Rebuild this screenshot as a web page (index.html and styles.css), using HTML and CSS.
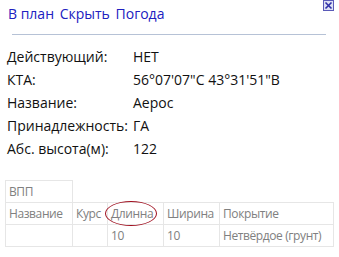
FILE: index.html
```html
<!DOCTYPE html>
<html lang="ru">

<head>
    <meta charset="UTF-8">
    <title>Аэродром</title>
    <link rel="stylesheet" href="styles.css">
</head>

<body>
    <div class="popup">
        <div class="top-bar">
            <div class="links">
                <a href="#">В план</a>
                <a href="#">Скрыть</a>
                <a href="#">Погода</a>
            </div>
            <a href="#" class="close">
                <svg width="11" height="11" viewBox="0 0 11 11">
                    <rect x="0.5" y="0.5" width="10" height="10" fill="#dde0f4" stroke="#5a5ab8"></rect>
                    <path d="M2.5 2.5 L8.5 8.5 M8.5 2.5 L2.5 8.5" stroke="#3030a8" stroke-width="1.6"></path>
                </svg>
            </a>
        </div>
        <div class="divider"></div>

        <!-- Сведения об аэродроме -->
        <div class="info">
            <span>Действующий:</span><span>НЕТ</span>
            <span>КТА:</span><span>56°07'07"С 43°31'51"В</span>
            <span>Название:</span><span>Аерос</span>
            <span>Принадлежность:</span><span>ГА</span>
            <span>Абс. высота(м):</span><span>122</span>
        </div>

        <!-- ВПП -->
        <table class="runways">
            <colgroup>
                <col class="col-name">
                <col class="col-course">
                <col class="col-length">
                <col class="col-width">
                <col class="col-cover">
            </colgroup>
            <tr>
                <td>ВПП</td>
            </tr>
            <tr>
                <td>Название</td>
                <td>Курс</td>
                <td><span class="marked">Длинна</span></td>
                <td>Ширина</td>
                <td>Покрытие</td>
            </tr>
            <tr>
                <td></td>
                <td></td>
                <td>10</td>
                <td>10</td>
                <td>Нетвёрдое (грунт)</td>
            </tr>
        </table>
    </div>
</body>

</html>
```

FILE: styles.css
```css
body {
    margin: 0;
    padding: 0;
    background: #fff;
    font-family: 'Open Sans', sans-serif;
    color: #111;
}

.popup {
    width: 339px;
}

.top-bar {
    display: flex;
    justify-content: space-between;
    height: 24px;
}

.links {
    padding: 4px 0 0 8px;
    font-size: 14px;
}

.links a {
    color: #2020c0;
    text-decoration: none;
    margin-right: 2px;
}

.close {
    display: block;
    margin: 0 5px 0 0;
    line-height: 0;
}

.divider {
    margin: 10px 13px 0 12px;
    height: 1px;
    background: #b6c2d6;
}

.info {
    display: grid;
    grid-template-columns: 126px auto;
    grid-auto-rows: 23px;
    align-items: center;
    padding: 10px 0 0 7px;
    font-size: 14px;
}

/* Таблица ВПП */
.runways {
    margin: 20px 0 0 5px;
    width: 328px;
    table-layout: fixed;
    border-collapse: collapse;
    font-size: 12px;
    letter-spacing: -0.4px;
    color: #808080;
}

.runways td {
    border: 1px solid #e6e6e6;
    height: 21px;
    padding: 0 0 0 3px;
    white-space: nowrap;
}

.col-name {
    width: 67px;
}

.col-course {
    width: 35px;
}

.col-length {
    width: 56px;
}

.col-width {
    width: 56px;
}

.col-cover {
    width: 114px;
}

.marked {
    position: relative;
}

.marked::after {
    content: "";
    position: absolute;
    left: -6px;
    right: -4px;
    top: -4px;
    bottom: -4px;
    border: 1px solid #a01020;
    border-radius: 50%;
}
```
